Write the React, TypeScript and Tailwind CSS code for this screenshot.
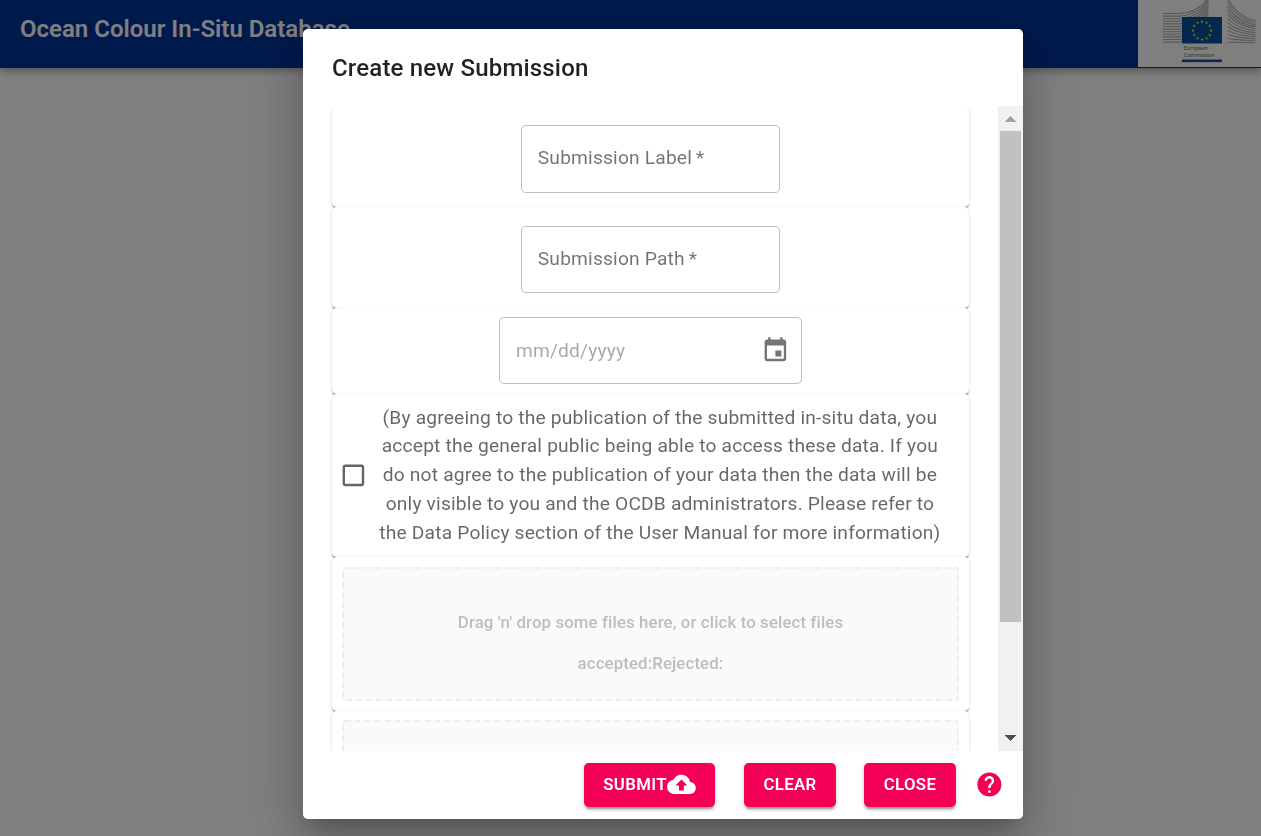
import type { ReactNode } from 'react';
import { MdCheckBoxOutlineBlank, MdCloudUpload, MdEvent, MdHelp } from 'react-icons/md';

const STARS = Array.from({ length: 12 }, (_, i) => {
  const a = (i * Math.PI) / 6;
  return { x: 92 + 9 * Math.sin(a), y: 30.5 - 9 * Math.cos(a) };
});

const LINES = Array.from({ length: 12 }, (_, i) => i);

function CommissionLogo() {
  return (
    <svg width="151" height="67" viewBox="28 0 151 67" className="block">
      <g fill="none" stroke="#b0b0b0" strokeWidth="1.1">
        {LINES.map((i) => (
          <path
            key={i}
            d={`M53 ${13.5 + i * 2.6} H70 Q90 ${12 + i * 2.1} 98.5 ${i * 2.4 - 3}`}
          />
        ))}
        {LINES.map((i) => (
          <path
            key={i}
            d={`M117.5 ${-2 + i * 4.05} Q${128 - i * 0.4} ${17.5 + i * 2.2} 145.5 ${20.5 + i * 2.05}`}
          />
        ))}
      </g>
      <rect x="72" y="17" width="40" height="26.5" fill="#084f9e" />
      <g fill="#fff200">
        {STARS.map((s, i) => (
          <path
            key={i}
            transform={`translate(${s.x} ${s.y}) scale(1.75)`}
            d="M0-1 .24-.3H.95L.38.12.59.8 0 .39-.59.8-.38.12-.95-.3H-.24Z"
          />
        ))}
      </g>
      <g fill="#505050" fontFamily="Open Sans, sans-serif" fontSize="5.3" fontWeight="500">
        <text x="74" y="50" textLength="24">European</text>
        <text x="74" y="56.6" textLength="30.5">Commission</text>
      </g>
      <rect x="72" y="59.5" width="40" height="2.6" fill="#1f4f9f" />
    </svg>
  );
}

function Row({ className, children }: { className: string; children: ReactNode }) {
  return (
    <div
      className={`flex shrink-0 items-center justify-center rounded-[4.8px] bg-white shadow-[0_2.4px_1.2px_-1.2px_rgba(0,0,0,0.2),0_1.2px_1.2px_0_rgba(0,0,0,0.14),0_1.2px_3.6px_0_rgba(0,0,0,0.12)] ${className}`}
    >
      {children}
    </div>
  );
}

function LabelField({ label, className }: { label: string; className: string }) {
  return (
    <div
      className={`flex w-[259px] items-center rounded-[4.8px] border border-black/25 pb-[2px] pl-[15.8px] text-[19.2px] leading-none tracking-[0.18px] text-black/55 ${className}`}
    >
      {label}
      <span className="ml-[4px]">*</span>
    </div>
  );
}

function ActionButton({ className, children }: { className: string; children: ReactNode }) {
  return (
    <button
      className={`flex h-[43.8px] items-center justify-center rounded-[4.8px] bg-[#f50057] pb-px text-[16.8px] font-semibold tracking-[0.36px] text-white shadow-[0_3.6px_1.2px_-2.4px_rgba(0,0,0,0.2),0_2.4px_2.4px_0_rgba(0,0,0,0.14),0_1.2px_6px_0_rgba(0,0,0,0.12)] ${className}`}
    >
      {children}
    </button>
  );
}

function Scrollbar() {
  return (
    <div className="flex w-[25px] shrink-0 flex-col items-center bg-[#f1f1f1]">
      <svg width="25" height="25" viewBox="0 0 25 25" shapeRendering="crispEdges" className="shrink-0">
        <path d="M7 16 12.5 10 18 16Z" fill="#a3a3a3" />
      </svg>
      <div className="h-[491px] w-[21px] bg-[#c1c1c1]" />
      <svg width="25" height="25" viewBox="0 0 25 25" shapeRendering="crispEdges" className="mt-auto shrink-0">
        <path d="M7 9 12.5 15 18 9Z" fill="#505050" />
      </svg>
    </div>
  );
}

export default function App() {
  return (
    <div className="h-[836px] w-full overflow-hidden bg-white font-[Roboto,sans-serif]">
      <header className="flex h-[68px] items-start justify-between bg-[#003399] shadow-[0_2.4px_4.8px_-1.2px_rgba(0,0,0,0.2),0_4.8px_6px_0_rgba(0,0,0,0.14),0_1.2px_12px_0_rgba(0,0,0,0.12)]">
        <h1 className="pt-[11px] pl-5 text-[24px] leading-[36px] font-semibold text-white">
          Ocean Colour In-Situ Database
        </h1>
        <div className="h-[67px] w-[123px] overflow-hidden bg-white">
          <CommissionLogo />
        </div>
      </header>

      <div className="fixed inset-0 flex items-start overflow-hidden bg-black/50">
        <section className="mt-[29px] ml-[303px] flex h-[790px] w-[720px] flex-col rounded-[4.8px] bg-white shadow-[0_13.2px_18px_-8.4px_rgba(0,0,0,0.2),0_28.8px_45.6px_3.6px_rgba(0,0,0,0.14),0_10.8px_55.2px_9.6px_rgba(0,0,0,0.12)]">
          <h2 className="h-[77px] shrink-0 pt-[19.5px] pl-[29px] text-[24px] leading-[38.4px] font-medium tracking-[0.18px] text-black/87">
            Create new Submission
          </h2>

          <div className="flex h-[645px] shrink-0 overflow-hidden">
            <div className="flex flex-1 flex-col overflow-hidden pr-[29px] pl-[29px]">
              <Row className="h-[100.8px] pt-[5px]">
                <LabelField label="Submission Label" className="h-[68px]" />
              </Row>
              <Row className="h-[100.8px] pt-[5px]">
                <LabelField label="Submission Path" className="h-[67.2px]" />
              </Row>
              <Row className="h-[86px]">
                <div className="flex h-[67.2px] w-[303px] items-center justify-between rounded-[4.8px] border border-black/25 pr-[11px] pl-[16px] text-[19.2px] tracking-[0.18px] text-black/35">
                  <span className="pt-[2px]">mm/dd/yyyy</span>
                  <MdEvent className="size-[28.8px] text-black/54" />
                </div>
              </Row>
              <Row className="h-[163px]">
                <MdCheckBoxOutlineBlank className="mr-[9px] ml-[7px] size-[28.8px] shrink-0 text-black/60" />
                <p className="flex-1 pt-[1px] pr-[26px] text-center text-[19.2px] leading-[28.8px] tracking-[0.18px] text-black/60">
                  (By agreeing to the publication of the submitted in-situ data, you
                  <br />
                  accept the general public being able to access these data. If you
                  <br />
                  do not agree to the publication of your data then the data will be
                  <br />
                  only visible to you and the OCDB administrators. Please refer to
                  <br />
                  the Data Policy section of the User Manual for more information)
                </p>
              </Row>
              <Row className="h-[154px] px-[9.6px]">
                <div className="flex h-[134px] w-full flex-col items-center rounded-[2.4px] border-2 border-dashed border-[#eeeeee] bg-[#fafafa] pt-[43px] text-[16.8px] leading-[21px] font-medium tracking-[0.13px] text-[#bdbdbd]">
                  <p>Drag 'n' drop some files here, or click to select files</p>
                  <p className="mt-5">accepted:Rejected:</p>
                </div>
              </Row>
              <Row className="h-[154px] px-[9.6px] pb-[2px]">
                <div className="h-[134px] w-full rounded-[2.4px] border-2 border-dashed border-[#eeeeee] bg-[#fafafa]" />
              </Row>
            </div>
            <Scrollbar />
          </div>

          <div className="flex h-[68px] items-center">
            <ActionButton className="ml-[281px] w-[131px]">
              SUBMIT
              <MdCloudUpload className="size-[28.8px]" />
            </ActionButton>
            <ActionButton className="ml-[29px] w-[92px]">CLEAR</ActionButton>
            <ActionButton className="ml-[28px] w-[92px]">CLOSE</ActionButton>
            <MdHelp className="mb-[2px] ml-[19px] size-[28.8px] text-[#f50057]" />
          </div>
        </section>
      </div>
    </div>
  );
}
